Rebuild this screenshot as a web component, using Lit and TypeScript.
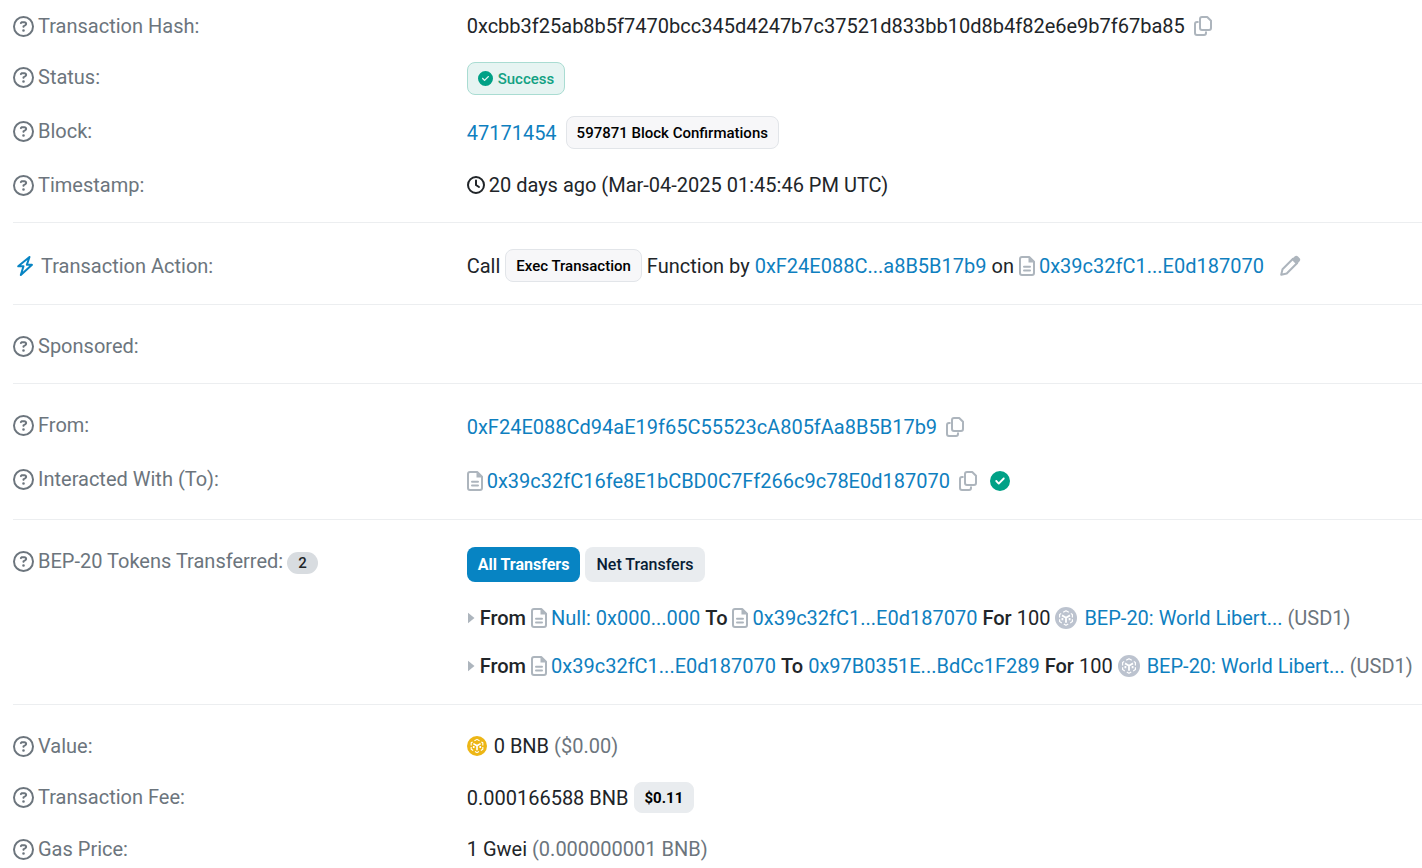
import { LitElement, html, css, svg } from "lit";
import { customElement } from "lit/decorators.js";

const helpIcon = html`<svg class="help" viewBox="0 0 512 512" aria-hidden="true"><path d="M464 256A208 208 0 1 0 48 256a208 208 0 1 0 416 0zM0 256a256 256 0 1 1 512 0A256 256 0 1 1 0 256zm169.800-90.700c7.900-22.300 29.100-37.300 52.800-37.300h58.300c34.900 0 63.100 28.300 63.100 63.100c0 22.600-12.100 43.500-31.700 54.800L280 264.400c-.2 13-10.900 23.600-24 23.600c-13.300 0-24-10.700-24-24V250.500c0-8.600 4.600-16.500 12.100-20.800l44.300-25.400c4.700-2.700 7.600-7.700 7.600-13.100c0-8.400-6.800-15.100-15.100-15.100H222.600c-3.400 0-6.400 2.100-7.500 5.300l-.4 1.200c-4.400 12.500-18.200 19-30.600 14.600s-19-18.200-14.600-30.600l.4-1.200zM224 352a32 32 0 1 1 64 0 32 32 0 1 1 -64 0z"/></svg>`;

const checkIcon = (cls: string) => html`<svg class=${cls} viewBox="0 0 512 512" aria-hidden="true"><path d="M256 512A256 256 0 1 0 256 0a256 256 0 1 0 0 512zM369 209L241 337c-9.400 9.400-24.600 9.400-33.900 0l-64-64c-9.400-9.400-9.400-24.600 0-33.900s24.600-9.400 33.900 0l47 47L335 175c9.400-9.400 24.600-9.400 33.900 0s9.400 24.600 0 33.900z"/></svg>`;

const clockIcon = html`<svg class="clock" viewBox="0 0 18 18" aria-hidden="true"><circle cx="9" cy="9" r="8"/><path d="M9 4.500V9l3 2"/></svg>`;

const boltIcon = html`<svg class="bolt" viewBox="0 0 18 22" aria-hidden="true"><path d="M13.500 2 2.200 11.300h5.300L4.800 20 16 9.800h-5.200z"/></svg>`;

const fileIcon = html`<svg class="file" viewBox="0 0 16 20" aria-hidden="true"><path d="M3 1h7.200L15 5.800V17a2 2 0 0 1-2 2H3a2 2 0 0 1-2-2V3a2 2 0 0 1 2-2z"/><path class="solid" d="M9.500 1v5.500H15z"/><path d="M5 10.800h6M5 14.500h6"/></svg>`;

const copyIcon = html`<svg class="copy" viewBox="0 0 18 20" aria-hidden="true"><path d="M8 1h5.200L17 4.800V12a2 2 0 0 1-2 2H8a2 2 0 0 1-2-2V3a2 2 0 0 1 2-2z"/><path d="M3.800 6H3a2 2 0 0 0-2 2v9a2 2 0 0 0 2 2h7a2 2 0 0 0 2-2v-.8"/></svg>`;

const pencilIcon = html`<svg class="pencil" viewBox="0 0 22 22" aria-hidden="true"><path d="M3.500 14.300 14 3.800l4.200 4.200L7.700 18.500 2.200 19.800z"/><path class="solid" d="M12.500 4.500 15.600 1.600a2.400 2.400 0 0 1 3.400 0l1.400 1.400a2.400 2.400 0 0 1 0 3.400L17.500 9.500z"/></svg>`;

const cube = svg`<circle class="disc" cx="11" cy="11" r="11"/><path class="edge" d="M8.200 5.300 11 3.700l2.800 1.600M15.800 6.500l1.600.9v3M17.400 12.200v2.400l-2.200 1.300M13.200 17 11 18.300 8.800 17M6.800 15.900l-2.200-1.300v-2.400M4.600 10.400v-3l1.600-.9"/><path class="core" d="M7 8.400l4 2.300 4-2.300M11 10.700v5M7.400 11v2.300M14.600 11v2.300"/>`;

const tokenIcon = html`<svg class="token" viewBox="0 0 22 22" aria-hidden="true">${cube}</svg>`;
const coinIcon = html`<svg class="token gold" viewBox="0 0 22 22" aria-hidden="true">${cube}</svg>`;

const copyButton = (label: string) =>
  html`<button class="icon-button" type="button" aria-label=${label}>${copyIcon}</button>`;

const link = (text: string) => html`<a href="#">${text}</a>`;
const contract = (text: string) => html`<span class="address">${fileIcon}${link(text)}</span>`;

const row = (label: unknown, value: unknown) => html`
  <div class="row">
    <dt>${helpIcon}<span>${label}</span></dt>
    <dd>${value}</dd>
  </div>
`;

const transfers = [
  { from: contract("Null: 0x000...000"), to: contract("0x39c32fC1...E0d187070") },
  { from: contract("0x39c32fC1...E0d187070"), to: link("0x97B0351E...BdCc1F289") },
];

@customElement("app-root")
export class AppRoot extends LitElement {
  static styles = css`
    :host {
      display: block;
      background: #fff;
      color: #212529;
      font-family: Roboto, "Liberation Sans", sans-serif;
      font-size: 20px;
      line-height: 30px;
    }
    a {
      color: #0f7fbf;
      text-decoration: none;
    }
    button {
      font-family: inherit;
      cursor: pointer;
      border: 0;
    }
    svg {
      flex: none;
      display: block;
    }
    dl, dd, dt, ul {
      margin: 0;
      padding: 0;
    }
    .details {
      padding: 11px 0 0 13px;
    }
    .section {
      display: flex;
      flex-direction: column;
      gap: 21px;
      padding: 26px 0 22px;
      border-bottom: 1px solid #eceef0;
    }
    .section:first-child {
      padding-top: 0;
    }
    .section:last-child {
      border-bottom: 0;
      padding-bottom: 0;
    }
    .row {
      display: grid;
      grid-template-columns: 32.2% 1fr;
      align-items: start;
    }
    .action {
      align-items: center;
    }
    dt {
      display: flex;
      align-items: center;
      gap: 4px;
      color: #6c757d;
    }
    dd {
      display: flex;
      align-items: center;
      flex-wrap: wrap;
      gap: 0 5px;
      white-space: nowrap;
    }
    .tall {
      display: flex;
      align-items: center;
      gap: 5px;
      min-height: 33px;
    }
    .help {
      width: 21px;
      height: 21px;
      fill: currentColor;
    }
    .bolt {
      width: 18px;
      height: 22px;
      margin: 0 3px;
      fill: none;
      stroke: #0784c3;
      stroke-width: 2;
      stroke-linejoin: round;
    }
    .clock {
      width: 18px;
      height: 18px;
      fill: none;
      stroke: currentColor;
      stroke-width: 2;
      stroke-linecap: round;
    }
    .time {
      display: flex;
      align-items: center;
      gap: 4px;
    }
    .file, .copy, .pencil {
      fill: none;
      stroke: #adb5bd;
      stroke-width: 2;
      stroke-linejoin: round;
      stroke-linecap: round;
    }
    .file {
      width: 16px;
      height: 20px;
    }
    .copy {
      width: 18px;
      height: 20px;
    }
    .pencil {
      width: 22px;
      height: 22px;
    }
    .solid {
      fill: #adb5bd;
      stroke: none;
    }
    .icon-button {
      display: flex;
      padding: 0 4px;
      background: none;
    }
    .edit {
      padding: 0 10px;
    }
    .verified {
      width: 20px;
      height: 20px;
      margin-left: 4px;
      fill: #00a186;
    }
    .address {
      display: flex;
      align-items: center;
      gap: 4px;
    }
    .badge {
      box-sizing: border-box;
      display: flex;
      align-items: center;
      gap: 5px;
      height: 33px;
      padding: 0 10px;
      border: 1px solid #e2e5e9;
      border-radius: 8px;
      background: #f7f7f9;
      color: #000;
      font-size: 15px;
      font-weight: 500;
      line-height: 20px;
    }
    .success {
      border-color: #a9dcd2;
      background: #e6f4f2;
      color: #12a183;
    }
    .check {
      width: 15px;
      height: 15px;
      fill: #00a186;
    }
    .block {
      gap: 9px;
    }
    .price {
      height: 31px;
      border-color: #e9ecef;
      background: #e9ecef;
      font-weight: 700;
    }
    .count {
      display: inline-block;
      margin-left: 4px;
      padding: 0 11px;
      border-radius: 11px;
      background: #d8dce0;
      color: #212529;
      font-size: 15px;
      font-weight: 500;
      line-height: 22px;
      vertical-align: middle;
    }
    .muted {
      color: #6c757d;
    }
    .tokens {
      display: block;
    }
    .tabs {
      display: flex;
      gap: 5px;
      padding: 1px 0 21px;
    }
    .tab {
      height: 35px;
      padding: 0 11px;
      border-radius: 8px;
      background: #e9ecef;
      color: #081d35;
      font-size: 16px;
      font-weight: 500;
    }
    .active {
      background: #0784c3;
      color: #fff;
      font-weight: 700;
    }
    .transfers {
      display: flex;
      flex-direction: column;
      gap: 18px;
      padding-bottom: 1px;
      list-style: none;
    }
    .transfer {
      display: flex;
      align-items: center;
      gap: 5px;
    }
    .key {
      font-weight: 500;
    }
    .caret {
      width: 8px;
      height: 12px;
      fill: #adb5bd;
    }
    .token {
      width: 22px;
      height: 22px;
      margin-right: 2px;
    }
    .disc {
      fill: #bcc3cf;
    }
    .gold {
      width: 20px;
      height: 20px;
    }
    .gold .disc {
      fill: #edb615;
    }
    .edge, .core {
      fill: none;
      stroke: #fff;
      stroke-width: 1.200;
      stroke-linejoin: round;
    }
    .core {
      stroke-width: 1.800;
    }
  `;

  render() {
    return html`
      <dl class="details">
        <div class="section">
          ${row("Transaction Hash:", html`
            <span>0xcbb3f25ab8b5f7470bcc345d4247b7c37521d833bb10d8b4f82e6e9b7f67ba85</span>
            ${copyButton("Copy transaction hash")}`)}
          ${row("Status:", html`<span class="badge success">${checkIcon("check")}Success</span>`)}
          ${row("Block:", html`
            <span class="tall block">${link("47171454")}<span class="badge">597871 Block Confirmations</span></span>`)}
          ${row("Timestamp:", html`
            <span class="time">${clockIcon}20 days ago (Mar-04-2025 01:45:46 PM UTC)</span>`)}
        </div>

        <div class="section">
          <div class="row action">
            <dt>${boltIcon}<span>Transaction Action:</span></dt>
            <dd>
              <span>Call</span>
              <span class="badge">Exec Transaction</span>
              <span>Function by</span>
              ${link("0xF24E088C...a8B5B17b9")}
              <span>on</span>
              ${contract("0x39c32fC1...E0d187070")}
              <button class="icon-button edit" type="button" aria-label="Add private note">${pencilIcon}</button>
            </dd>
          </div>
        </div>

        <div class="section">${row("Sponsored:", "")}</div>

        <div class="section">
          ${row("From:", html`
            <span class="tall">${link("0xF24E088Cd94aE19f65C55523cA805fAa8B5B17b9")}${copyButton("Copy sender address")}</span>`)}
          ${row("Interacted With (To):", html`
            <span class="tall">${contract("0x39c32fC16fe8E1bCBD0C7Ff266c9c78E0d187070")}${copyButton("Copy contract address")}${checkIcon("verified")}</span>`)}
        </div>

        <div class="section">
          <div class="row">
            <dt>${helpIcon}<span>BEP-20 Tokens Transferred:<span class="count">2</span></span></dt>
            <dd class="tokens">
              <div class="tabs">
                <button class="tab active" type="button">All Transfers</button>
                <button class="tab" type="button">Net Transfers</button>
              </div>
              <ul class="transfers">
                ${transfers.map((t) => html`
                  <li class="transfer">
                    <svg class="caret" viewBox="0 0 8 12" aria-hidden="true"><path d="M1 0.800v10.400L7.500 6z"/></svg>
                    <span class="key">From</span>${t.from}
                    <span class="key">To</span>${t.to}
                    <span class="key">For</span><span>100</span>
                    ${tokenIcon}${link("BEP-20: World Libert...")}
                    <span class="muted">(USD1)</span>
                  </li>`)}
              </ul>
            </dd>
          </div>
        </div>

        <div class="section">
          ${row("Value:", html`${coinIcon}<span>0 BNB</span><span class="muted">($0.00)</span>`)}
          ${row("Transaction Fee:", html`<span>0.000166588 BNB</span><span class="badge price">$0.11</span>`)}
          ${row("Gas Price:", html`<span>1 Gwei</span><span class="muted">(0.000000001 BNB)</span>`)}
        </div>
      </dl>
    `;
  }
}
